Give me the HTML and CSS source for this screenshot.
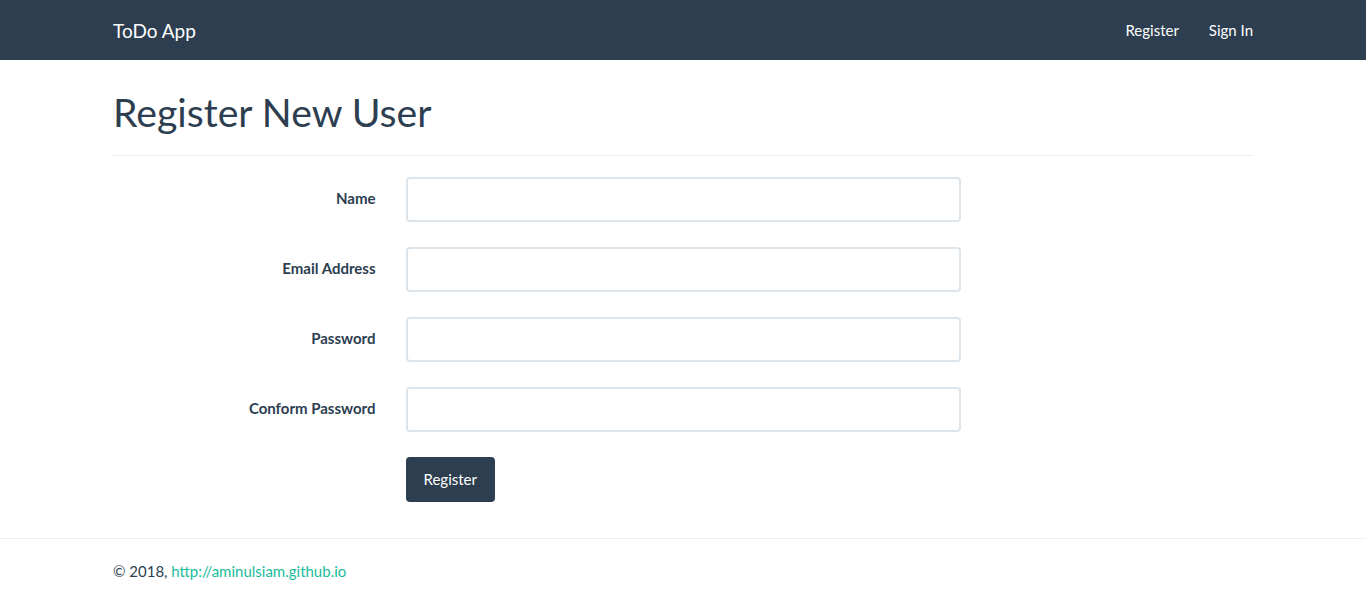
FILE: index.html
```html
<!DOCTYPE html>
<html lang="en">
<head>
<meta charset="utf-8">
<title>ToDo App - Register</title>
<link rel="stylesheet" href="styles.css">
</head>
<body>
<nav class="navbar">
  <div class="container navbar-inner">
    <a class="brand" href="#">ToDo App</a>
    <ul class="nav-links">
      <li><a href="#">Register</a></li>
      <li><a href="#">Sign In</a></li>
    </ul>
  </div>
</nav>
<main class="container main">
  <h1 class="title">Register New User</h1>
  <hr class="divider">
  <form class="form">
    <label class="label" for="name">Name</label>
    <input class="input" id="name" type="text">
    <label class="label" for="email">Email Address</label>
    <input class="input" id="email" type="email">
    <label class="label" for="pw">Password</label>
    <input class="input" id="pw" type="password">
    <label class="label" for="pw2">Conform Password</label>
    <input class="input" id="pw2" type="password">
    <div class="actions"><button class="btn" type="button">Register</button></div>
  </form>
</main>
<footer class="footer">
  <div class="container footer-inner">© 2018, <a class="link" href="#">http://aminulsiam.github.io</a></div>
</footer>
</body>
</html>
```
FILE: styles.css
```css
* { box-sizing: border-box; }
html, body { margin: 0; padding: 0; }
body {
  font-family: Lato, "Liberation Sans", sans-serif;
  font-size: 15px;
  line-height: 1.42857;
  color: #2c3e50;
  background: #fff;
}
a { text-decoration: none; }
.container { width: 1140px; margin: 0 auto; }
.navbar { background: #2c3e50; height: 60px; }
.navbar-inner { display: flex; justify-content: space-between; align-items: center; height: 60px; }
.brand { color: #fff; font-size: 19px; line-height: 21px; }
.nav-links { list-style: none; margin: 0; padding: 0; display: flex; gap: 30px; }
.nav-links a { color: #fff; font-size: 15px; line-height: 21px; display: block; }
.main { padding-top: 30px; }
.title { font-size: 39.2px; font-weight: 400; line-height: 43px; margin: 0; }
.divider { border: 0; border-top: 1px solid #ecf0f1; margin: 22px 0 21px; }
.form { display: grid; grid-template-columns: 262.5px 555px; column-gap: 30px; row-gap: 25px; }
.label { text-align: right; font-weight: 700; padding-top: 11px; }
.input {
  height: 45px;
  border: 2px solid #dce4ec;
  border-radius: 4px;
  padding: 10px 15px;
  font: inherit;
  color: #2c3e50;
  background: #fff;
  outline: none;
}
.actions { grid-column: 2; }
.btn {
  font: inherit;
  color: #fff;
  background: #2c3e50;
  border: 0;
  border-radius: 4px;
  height: 45px;
  padding: 10px 18px;
  cursor: pointer;
}
.footer { margin-top: 36px; border-top: 1px solid #ecf0f1; }
.footer-inner { padding-top: 22px; }
.link { color: #18bc9c; }
```
